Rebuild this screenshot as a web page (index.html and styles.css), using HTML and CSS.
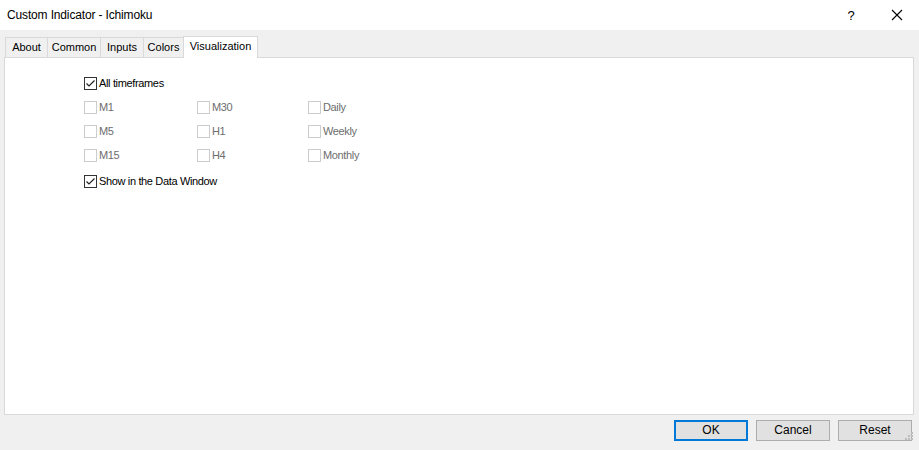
FILE: index.html
```html
<!DOCTYPE html>
<html>
<head>
<meta charset="utf-8">
<link rel="stylesheet" href="styles.css">
</head>
<body>
<div class="window">
  <div class="titlebar">
    <div class="title">Custom Indicator - Ichimoku</div>
    <div class="caption-btns">
      <span class="cap help">?</span>
      <span class="cap close">
        <svg width="12" height="12" viewBox="0 0 12 12"><path d="M1 1 L11 11 M11 1 L1 11" stroke="#000" stroke-width="1.1" fill="none"/></svg>
      </span>
    </div>
  </div>
  <div class="client">
    <div class="tabs">
      <div class="tab t-about">About</div>
      <div class="tab t-common">Common</div>
      <div class="tab t-inputs">Inputs</div>
      <div class="tab t-colors">Colors</div>
      <div class="tab t-vis active">Visualization</div>
    </div>
    <div class="panel">
      <div class="content">
        <label class="cb"><span class="box checked"><svg width="11" height="11" viewBox="0 0 11 11"><path d="M1.5 5.5 L4 8 L9.5 2.5" stroke="#222" stroke-width="1.2" fill="none"/></svg></span>All timeframes</label>
        <div class="grid">
          <label class="cb dis"><span class="box"></span>M1</label>
          <label class="cb dis"><span class="box"></span>M30</label>
          <label class="cb dis"><span class="box"></span>Daily</label>
          <label class="cb dis"><span class="box"></span>M5</label>
          <label class="cb dis"><span class="box"></span>H1</label>
          <label class="cb dis"><span class="box"></span>Weekly</label>
          <label class="cb dis"><span class="box"></span>M15</label>
          <label class="cb dis"><span class="box"></span>H4</label>
          <label class="cb dis"><span class="box"></span>Monthly</label>
        </div>
        <label class="cb last"><span class="box checked"><svg width="11" height="11" viewBox="0 0 11 11"><path d="M1.5 5.5 L4 8 L9.5 2.5" stroke="#222" stroke-width="1.2" fill="none"/></svg></span>Show in the Data Window</label>
      </div>
    </div>
    <div class="footer">
      <button class="btn default">OK</button>
      <button class="btn">Cancel</button>
      <button class="btn">Reset</button>
      <span class="grip">
        <svg width="8" height="8" viewBox="0 0 8 8">
          <rect x="6" y="0" width="2" height="2" fill="#bcbcbc"/>
          <rect x="3" y="3" width="2" height="2" fill="#bcbcbc"/>
          <rect x="6" y="3" width="2" height="2" fill="#bcbcbc"/>
          <rect x="0" y="6" width="2" height="2" fill="#bcbcbc"/>
          <rect x="3" y="6" width="2" height="2" fill="#bcbcbc"/>
          <rect x="6" y="6" width="2" height="2" fill="#bcbcbc"/>
        </svg>
      </span>
    </div>
  </div>
</div>
</body>
</html>
```
FILE: styles.css
```css
* { box-sizing: border-box; }
html, body { margin: 0; padding: 0; }
body {
  width: 919px;
  height: 450px;
  overflow: hidden;
  font-family: "Liberation Sans", Arial, sans-serif;
  background: #f0f0f0;
}
.window { width: 919px; height: 450px; display: flex; flex-direction: column; }
.titlebar {
  height: 30px;
  background: #fff;
  display: flex;
  align-items: center;
  justify-content: space-between;
  padding-left: 7px;
}
.title { font-size: 12px; color: #000; letter-spacing: -0.15px; }
.caption-btns { display: flex; height: 30px; }
.cap {
  width: 46px;
  height: 30px;
  display: flex;
  align-items: center;
  justify-content: center;
  font-size: 13px;
}
.close { width: 45px; }
.client {
  flex: 1;
  background: #f0f0f0;
  padding: 6px 5px 0 4px;
  display: flex;
  flex-direction: column;
  position: relative;
}
.tabs {
  display: flex;
  align-items: flex-end;
  height: 21px;
  padding-left: 1px;
  position: relative;
  z-index: 1;
}
.tab {
  height: 20px;
  border: 1px solid #d9d9d9;
  border-bottom: none;
  margin-left: -1px;
  font-size: 11px;
  line-height: 19px;
  color: #000;
  background: #f0f0f0;
  text-align: center;
  flex: none;
}
.tab:first-child { margin-left: 0; }
.t-about { width: 43px; }
.t-common { width: 54px; }
.t-inputs { width: 44px; }
.t-colors { width: 41px; }
.t-vis { width: 75px; }
.tab.active {
  height: 22px;
  background: #fff;
  margin-bottom: -1px;
  line-height: 18px;
}
.panel {
  height: 358px;
  border: 1px solid #d9d9d9;
  background: #fff;
}
.content {
  padding: 18px 0 0 79px;
  display: flex;
  flex-direction: column;
}
.cb {
  display: flex;
  align-items: center;
  height: 14px;
  font-size: 11px;
  color: #000;
  letter-spacing: -0.35px;
  white-space: nowrap;
}
.cb .box {
  width: 13px;
  height: 13px;
  border: 1px solid #333;
  background: #fff;
  margin-right: 2px;
  display: flex;
  align-items: center;
  justify-content: center;
  flex: none;
}
.cb.dis { color: #6d6d6d; }
.cb.dis .box { border-color: #cccccc; }
.grid {
  display: grid;
  grid-template-columns: 113px 111px 80px;
  row-gap: 10px;
  margin-top: 10px;
}
.cb.last { margin-top: 12px; }
.footer {
  display: flex;
  justify-content: flex-end;
  gap: 8px;
  padding: 5px 2px 0 0;
  position: relative;
}
.btn {
  width: 74px;
  height: 21px;
  background: #e1e1e1;
  border: 1px solid #adadad;
  font-family: "Liberation Sans", Arial, sans-serif;
  font-size: 12px;
  color: #000;
  padding: 0;
  line-height: 19px;
  flex: none;
}
.btn.default { border: 2px solid #0078d7; line-height: 17px; }
.grip {
  position: absolute;
  right: 1px;
  bottom: 1px;
  width: 8px;
  height: 8px;
  display: flex;
}
```
